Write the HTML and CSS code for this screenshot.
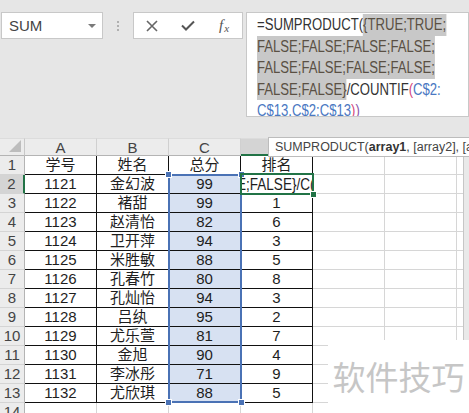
FILE: index.html
```html
<!DOCTYPE html>
<html lang="zh-CN">
<head>
<meta charset="utf-8">
<title>SUMPRODUCT</title>
<link rel="stylesheet" href="styles.css">
</head>
<body>
<div class="top">
  <div class="namebox"><span class="nb-text">SUM</span><span class="nb-arrow"></span></div>
  <div class="dots"><i></i><i></i><i></i></div>
  <div class="fxgroup">
    <span class="btn"><svg width="12" height="12" viewBox="0 0 12 12"><path d="M1 1L11 11M11 1L1 11" stroke="#666" stroke-width="1.6" fill="none"/></svg></span>
    <span class="btn"><svg width="14" height="11" viewBox="0 0 14 11"><path d="M1 5.5L5 9.5L13 1.5" stroke="#555" stroke-width="2" fill="none"/></svg></span>
    <span class="btn fx"><i class="f">f</i><i class="x">x</i></span>
  </div>
  <div class="formula">
    <div class="ftext">
      <div class="fl">=SUMPRODUCT(<span class="hl">{TRUE;TRUE;</span></div>
      <div class="fl"><span class="hl">FALSE;FALSE;FALSE;FALSE;</span></div>
      <div class="fl"><span class="hl">FALSE;FALSE;FALSE;FALSE;</span></div>
      <div class="fl"><span class="hl">FALSE;FALSE}</span>/COUNTIF<span class="pk">(</span><span class="bl">C$2:</span></div>
      <div class="fl"><span class="bl">C$13,C$2:C$13</span><span class="pk">)</span><span class="pu">)</span></div>
    </div>
  </div>
</div>
<div class="gap"></div>
<div class="sheetwrap">
  <div class="sheet">
    <div class="corner"><span class="tri"></span></div><div class="ch">A</div><div class="ch">B</div><div class="ch">C</div><div class="ch sel">D</div><div class="ch">E</div><div class="ch">F</div><div class="ch g"></div>

    <div class="rh">1</div><div class="c t">学号</div><div class="c t">姓名</div><div class="c t">总分</div><div class="c t">排名</div><div class="c"></div><div class="c"></div><div class="c g"></div>
    <div class="rh sel">2</div><div class="c t">1121</div><div class="c t">金幻波</div><div class="c t s">99</div><div class="c t act"><span class="edit">E;FALSE}/C(</span></div><div class="c"></div><div class="c"></div><div class="c g"></div>
    <div class="rh">3</div><div class="c t">1122</div><div class="c t">褚甜</div><div class="c t s">99</div><div class="c t">1</div><div class="c"></div><div class="c"></div><div class="c g"></div>
    <div class="rh">4</div><div class="c t">1123</div><div class="c t">赵清怡</div><div class="c t s">82</div><div class="c t">6</div><div class="c"></div><div class="c"></div><div class="c g"></div>
    <div class="rh">5</div><div class="c t">1124</div><div class="c t">卫开萍</div><div class="c t s">94</div><div class="c t">3</div><div class="c"></div><div class="c"></div><div class="c g"></div>
    <div class="rh">6</div><div class="c t">1125</div><div class="c t">米胜敏</div><div class="c t s">88</div><div class="c t">5</div><div class="c"></div><div class="c"></div><div class="c g"></div>
    <div class="rh">7</div><div class="c t">1126</div><div class="c t">孔春竹</div><div class="c t s">80</div><div class="c t">8</div><div class="c"></div><div class="c"></div><div class="c g"></div>
    <div class="rh">8</div><div class="c t">1127</div><div class="c t">孔灿怡</div><div class="c t s">94</div><div class="c t">3</div><div class="c"></div><div class="c"></div><div class="c g"></div>
    <div class="rh">9</div><div class="c t">1128</div><div class="c t">吕纨</div><div class="c t s">95</div><div class="c t">2</div><div class="c"></div><div class="c"></div><div class="c g"></div>
    <div class="rh">10</div><div class="c t">1129</div><div class="c t">尤乐萱</div><div class="c t s">81</div><div class="c t">7</div><div class="c"></div><div class="c"></div><div class="c g"></div>
    <div class="rh">11</div><div class="c t">1130</div><div class="c t">金旭</div><div class="c t s">90</div><div class="c t">4</div><div class="c"></div><div class="c"></div><div class="c g"></div>
    <div class="rh">12</div><div class="c t">1131</div><div class="c t">李冰彤</div><div class="c t s">71</div><div class="c t">9</div><div class="c"></div><div class="c"></div><div class="c g"></div>
    <div class="rh">13</div><div class="c t">1132</div><div class="c t">尤欣琪</div><div class="c t s">88</div><div class="c t">5</div><div class="c"></div><div class="c"></div><div class="c g"></div>
    <div class="rh">14</div><div class="c"></div><div class="c"></div><div class="c"></div><div class="c"></div><div class="c"></div><div class="c"></div><div class="c g"></div>

    <div class="selbox"><i class="h tl"></i><i class="h tr"></i><i class="h bl"></i><i class="h br"></i></div>
    <div class="actbox"><i class="fh"></i></div>
  </div>
  <div class="vscroll"></div>
</div>
<div class="tip">SUMPRODUCT(<b>array1</b>, [array2], [array3], ...)</div>
<div class="watermark">软件技巧</div>
</body>
</html>
```

FILE: styles.css
```css
html, body {
  margin: 0;
  padding: 0;
  width: 469px;
  height: 413px;
  overflow: hidden;
}
body {
  background: #e6e6e6;
  font-family: "Liberation Sans", "Noto Sans CJK SC", sans-serif;
  color: #222;
}

/* ---------- top bar ---------- */
.top {
  display: flex;
  align-items: flex-start;
  height: 117px;
  box-sizing: border-box;
  padding-top: 12px;
}
.namebox {
  box-sizing: border-box;
  margin-left: 1px;
  width: 102px;
  height: 27px;
  background: #fff;
  border: 1px solid #c8c8c8;
  display: flex;
  align-items: center;
  justify-content: space-between;
  padding: 0 6px 0 7px;
}
.nb-text {
  font-size: 15px;
  color: #444;
}
.nb-arrow {
  width: 0;
  height: 0;
  border-left: 4px solid transparent;
  border-right: 4px solid transparent;
  border-top: 4px solid #7a7a7a;
}
.dots {
  width: 30px;
  height: 27px;
  display: flex;
  flex-direction: column;
  align-items: center;
  justify-content: center;
  gap: 2px;
}
.dots i {
  display: block;
  width: 2px;
  height: 2px;
  background: #b0b0b0;
}
.fxgroup {
  box-sizing: border-box;
  width: 110px;
  height: 27px;
  background: #fff;
  border: 1px solid #c8c8c8;
  display: flex;
  align-items: center;
}
.btn {
  flex: 1;
  display: flex;
  justify-content: center;
  align-items: center;
  height: 100%;
}
.fx i {
  font-family: "Liberation Serif", serif;
  font-style: italic;
  color: #555;
}
.fx .f { font-size: 15px; }
.fx .x { font-size: 11px; margin-top: 4px; margin-left: 1px; }

.formula {
  box-sizing: border-box;
  margin-left: 3px;
  width: 223px;
  height: 105px;
  background: #fff;
  border: 1px solid #c8c8c8;
  padding: 1px 0 0 10px;
  overflow: hidden;
  font-size: 16px;
  color: #333;
}
.ftext {
  width: 260px;
  transform: scaleX(0.82);
  transform-origin: 0 0;
}
.fl {
  height: 21.6px;
  line-height: 21.6px;
  white-space: nowrap;
}
.hl {
  display: inline-block;
  height: 21.6px;
  line-height: 21.6px;
  background: #c8c8c8;
  color: #5a5044;
  vertical-align: top;
}
.pk { color: #d4457c; }
.pu { color: #8c55a8; }
.bl { color: #4a78c2; }

.gap { height: 21px; }

/* ---------- sheet ---------- */
.sheetwrap {
  display: flex;
  height: 275px;
  overflow: hidden;
}
.sheet {
  position: relative;
  display: grid;
  grid-template-columns: 25px repeat(6, 72px) 6px;
  grid-template-rows: 18px;
  grid-auto-rows: 19px;
  background: #fff;
  font-size: 15px;
}
.sheet > div {
  box-sizing: border-box;
}
.corner {
  background: #ececec;
  border-right: 1px solid #c8c8c8;
  border-bottom: 1px solid #b4b4b4;
  border-top: 1px solid #dcdcdc;
  position: relative;
}
.tri {
  position: absolute;
  right: 3px;
  bottom: 3px;
  width: 0;
  height: 0;
  border-left: 12px solid transparent;
  border-bottom: 12px solid #bdbdbd;
}
.ch {
  background: #ececec;
  border-top: 1px solid #dcdcdc;
  border-right: 1px solid #d0d0d0;
  border-bottom: 1px solid #b4b4b4;
  color: #444;
  text-align: center;
  line-height: 17px;
}
.ch.sel {
  background: #d4d4d4;
  border-bottom: 2px solid #217346;
}
.ch.g { border-right: none; }
.rh {
  background: #ececec;
  border-right: 1px solid #b4b4b4;
  border-bottom: 1px solid #d4d4d4;
  color: #444;
  text-align: center;
  line-height: 18px;
}
.rh.sel {
  background: #d4d4d4;
  border-right: 2px solid #217346;
}
.c {
  border-right: 1px solid #d6d6d6;
  border-bottom: 1px solid #d6d6d6;
  text-align: center;
  line-height: 18px;
  white-space: nowrap;
  overflow: hidden;
  color: #1e1e1e;
}
.c.g { border-right: none; }
.c.t {
  border-right-color: #111;
  border-bottom-color: #111;
}
.c.s { background: #d7e1f2; }
.c.act { text-align: left; }
.edit {
  display: inline-block;
  margin-left: -4px;
  font-size: 16.5px;
  transform: scaleX(0.82);
  transform-origin: 0 0;
}

.selbox {
  position: absolute;
  left: 168px;
  top: 36px;
  width: 74px;
  height: 229px;
  box-sizing: border-box;
  border: 2px solid #4a72b5;
}
.h {
  position: absolute;
  width: 5px;
  height: 5px;
  background: #4a72b5;
  border: 1px solid #fff;
}
.h.tl { left: -5px; top: -5px; }
.h.tr { right: -5px; top: -5px; }
.h.bl { left: -5px; bottom: -5px; }
.h.br { right: -5px; bottom: -5px; }
.actbox {
  position: absolute;
  left: 240px;
  top: 35px;
  width: 74px;
  height: 22px;
  box-sizing: border-box;
  border: 2px solid #217346;
}
.fh {
  position: absolute;
  right: -5px;
  bottom: -5px;
  width: 5px;
  height: 5px;
  background: #217346;
  border: 1px solid #fff;
}
.vscroll {
  width: 6px;
  box-sizing: border-box;
  background: #e9e9e9;
  border-left: 1px solid #c6c6c6;
}

/* ---------- overlays ---------- */
.tip {
  position: absolute;
  left: 268px;
  top: 137px;
  width: 201px;
  height: 20px;
  box-sizing: border-box;
  background: #fff;
  border: 1px solid #bcbcbc;
  border-right: none;
  padding-left: 6px;
  font-size: 12.5px;
  line-height: 18px;
  color: #444;
  white-space: nowrap;
  overflow: hidden;
}
.tip b { color: #333; }
.watermark {
  position: absolute;
  left: 328px;
  top: 340px;
  width: 141px;
  height: 73px;
  background: #fff;
  color: #c6c6c6;
  font-family: "Noto Sans CJK SC", sans-serif;
  font-size: 33px;
  line-height: 73px;
  text-align: center;
  white-space: nowrap;
}
```
